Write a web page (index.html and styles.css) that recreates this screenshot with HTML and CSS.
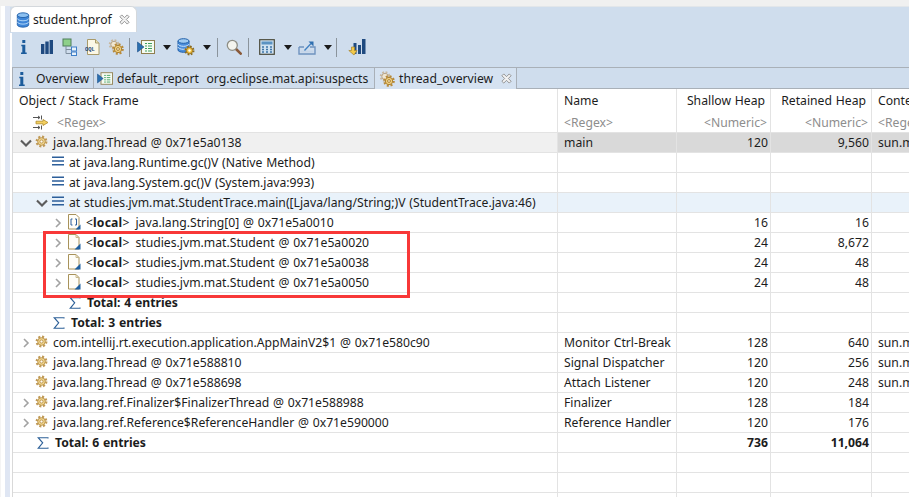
FILE: index.html
```html
<!DOCTYPE html>
<html lang="en">
<head>
<meta charset="utf-8">
<title>student.hprof</title>
<link rel="stylesheet" href="styles.css">
</head>
<body>
<svg class="sprite" xmlns="http://www.w3.org/2000/svg">
  <symbol id="db" viewBox="0 0 16 18">
    <path d="M1.5 3.5v11c0 1.500 3 2.700 6.500 2.700s6.500-1.200 6.500-2.700v-11z" fill="#3f86d8" stroke="#1f5fa8"/>
    <ellipse cx="8" cy="3.500" rx="6.500" ry="2.700" fill="#8cc0f0" stroke="#1f5fa8"/>
    <path d="M1.500 7.200c0 1.500 3 2.700 6.500 2.700s6.500-1.200 6.500-2.700M1.500 11c0 1.500 3 2.700 6.500 2.700s6.500-1.200 6.500-2.700" fill="none" stroke="#bfe0fa"/>
  </symbol>
  <symbol id="info" viewBox="0 0 16 16">
    <path d="M6.300 1v3h3V1zM5.300 5.800h4v7.700h1.400V15H5v-1.500h1.300V7.300h-1z" fill="#1c5c9c"/>
  </symbol>
  <symbol id="bars" viewBox="0 0 16 16">
    <path d="M2 5h3.400v10H2zM6.300 2.500h3.400V15H6.300zM10.600 1H14v14h-3.400z" fill="#1f4a80"/>
  </symbol>
  <symbol id="tree" viewBox="0 0 16 18">
    <rect x="1" y="1" width="8" height="7" fill="#8ed08a" stroke="#4f7f5a"/>
    <path d="M4 8v7.500h5M4 11.500h5" fill="none" stroke="#7f8f9f"/>
    <rect x="9.500" y="9" width="5" height="4" fill="#e8f2fb" stroke="#3f7fc8"/>
    <rect x="9.500" y="14" width="5" height="3.500" fill="#e8f2fb" stroke="#3f7fc8"/>
  </symbol>
  <symbol id="oql" viewBox="0 0 16 16">
    <path d="M2.500.5h8l3.500 3.500v11.500H2.500z" fill="#fbf7e6" stroke="#a89a6a"/>
    <path d="M10.500.5v3.500H14" fill="#e9dfb5" stroke="#a89a6a"/>
    <text x="0" y="11.500" class="oql-text">OQL</text>
  </symbol>
  <symbol id="gear" viewBox="0 0 16 16">
    <circle cx="8" cy="8" r="5.700" fill="none" stroke="#c09a58" stroke-width="3.200" stroke-dasharray="2.400 2.070"/>
    <circle cx="8" cy="8" r="4.700" fill="#f0d48c" stroke="#b48c44"/>
    <circle cx="8" cy="8" r="1.900" fill="#fffaf0" stroke="#b48c44"/>
  </symbol>
  <symbol id="gears" viewBox="0 0 16 16">
    <circle cx="6" cy="5.500" r="4" fill="none" stroke="#c8b8a0" stroke-width="2.600" stroke-dasharray="1.700 1.450"/>
    <circle cx="6" cy="5.500" r="3.200" fill="#efe6d2" stroke="#b8a58a"/>
    <circle cx="10" cy="10" r="4.500" fill="none" stroke="#b88a3a" stroke-width="2.600" stroke-dasharray="1.900 1.630"/>
    <circle cx="10" cy="10" r="3.700" fill="#f0d080" stroke="#ac8232"/>
    <circle cx="10" cy="10" r="1.400" fill="#fff8e0" stroke="#ac8232"/>
  </symbol>
  <symbol id="report" viewBox="0 0 18 16">
    <rect x="4.500" y="1.500" width="13" height="13" fill="#f6fbf2" stroke="#8f7f4f"/>
    <path d="M8 4.500h2M11 4.500h4M8 7h2M11 7h4M8 9.500h2M11 9.500h4M8 12h2M11 12h4" stroke="#3f9f5f"/>
    <path d="M.5 3l6.500 5-6.500 5z" fill="#2a6fb0" stroke="#1c4f88" stroke-width=".6"/>
  </symbol>
  <symbol id="dbgear" viewBox="0 0 18 18">
    <path d="M1 3v9c0 1.300 2.500 2.300 5.500 2.300s5.500-1 5.500-2.300V3z" fill="#4a8edc" stroke="#1f5fa8"/>
    <ellipse cx="6.500" cy="3" rx="5.500" ry="2.300" fill="#a0ccf2" stroke="#1f5fa8"/>
    <path d="M1 6c0 1.300 2.500 2.300 5.500 2.300S12 7.300 12 6M1 9c0 1.300 2.500 2.300 5.500 2.300S12 10.300 12 9" fill="none" stroke="#cfe6fb"/>
    <circle cx="12.500" cy="12.500" r="3.800" fill="none" stroke="#8a6a20" stroke-width="2.400" stroke-dasharray="1.600 1.380"/>
    <circle cx="12.500" cy="12.500" r="3.200" fill="#f0c040" stroke="#9a7420"/>
    <circle cx="12.500" cy="12.500" r="1.200" fill="#fff"/>
  </symbol>
  <symbol id="search" viewBox="0 0 16 16">
    <path d="M10 10l4.700 4.700" stroke="#8a5a3a" stroke-width="2.600" stroke-linecap="round"/>
    <circle cx="6.300" cy="6.300" r="5" fill="#f4f4ee" stroke="#8f8f86" stroke-width="1.300"/>
  </symbol>
  <symbol id="calc" viewBox="0 0 16 16">
    <rect x=".7" y=".7" width="14.600" height="14.600" fill="#cfe2f2" stroke="#4a4a3a" stroke-width="1.200"/>
    <rect x="2.500" y="2.500" width="11" height="3" fill="#5a92c2"/>
    <path d="M3 8h2M7 8h2M11 8h2M3 10.500h2M7 10.500h2M11 10.500h2M3 13h2M7 13h2M11 13h2" stroke="#3f76a8" stroke-width="1.400"/>
  </symbol>
  <symbol id="export" viewBox="0 0 18 16">
    <path d="M1 8h5M12 8h5v7H1V8" fill="none" stroke="#6f93bf" stroke-width="1.400"/>
    <path d="M2.500 11.500h13v2h-13z" fill="#c5d5e8"/>
    <path d="M6.500 11.500L13 4.500" stroke="#3f7fc0" stroke-width="1.300"/>
    <path d="M10.500 2.500h5v5z" fill="#2f6fb0"/>
  </symbol>
  <symbol id="barsarrow" viewBox="0 0 18 18">
    <path d="M5.500 5h3v11h-3zM10 7h3v9h-3zM14 1h3.500v15H14z" fill="#1f4a80"/>
    <path d="M6.500 9v3.500H9L6 17 .8 12.500h2.700V9z" fill="#f2c94a" stroke="#a8842a" stroke-width=".7"/>
  </symbol>
  <symbol id="close" viewBox="0 0 12 12">
    <path d="M1 3l2-2 3 3 3-3 2 2-3 3 3 3-2 2-3-3-3 3-2-2 3-3z" fill="#f2f2f2" stroke="#8c8c8c"/>
  </symbol>
  <symbol id="list" viewBox="0 0 14 10">
    <path d="M1 1.200h12M1 5h12M1 8.800h12" stroke="#2d5f9a" stroke-width="1.600"/>
  </symbol>
  <symbol id="doc" viewBox="0 0 14 16">
    <path d="M1.500.5h7.500l3 3v11.500H1.500z" fill="#fffef8" stroke="#a8925a"/>
    <path d="M9 .5v3h3" fill="none" stroke="#c8b88a"/>
    <path d="M13.500 9.500v6h-6z" fill="#20609f"/>
  </symbol>
  <symbol id="arraydoc" viewBox="0 0 14 16">
    <path d="M1.500.5h7.500l3 3v11.500H1.500z" fill="#fffef8" stroke="#a8925a"/>
    <path d="M5.500 5H4v6h1.500M8 5h1.500v6H8" fill="none" stroke="#2d5f9a"/>
    <path d="M13.500 10.500v5h-5z" fill="#20609f"/>
  </symbol>
  <symbol id="sigma" viewBox="0 0 12 12">
    <path d="M11 1.500V.7H1.200l4.500 5.100L1.200 11.300H11v-.9" fill="none" stroke="#2d6098" stroke-width="1.100"/>
  </symbol>
  <symbol id="right" viewBox="0 0 8 10">
    <path d="M2 1l4 4-4 4" fill="none" stroke="#a2a2a2" stroke-width="1.600"/>
  </symbol>
  <symbol id="down" viewBox="0 0 10 8">
    <path d="M1 2l4 4 4-4" fill="none" stroke="#5c5c5c" stroke-width="1.700"/>
  </symbol>
  <symbol id="filter" viewBox="0 0 18 15">
    <path d="M1 2.500h7M6 1l2 1.500L6 4M9.500.5v4M1 12.500h7M6 11l2 1.500L6 14M9.500 10.500v4" fill="none" stroke="#555"/>
    <path d="M4 6.200h7V4.500l5 3-5 3V8.800H4z" fill="#f3d060" stroke="#b08a2a" stroke-width=".8"/>
  </symbol>
</svg>

<div class="app">
  <div class="gutter"></div>
  <main class="editor">
    <div class="editor-tabs">
      <div class="editor-tab">
        <svg class="ico-db"><use href="#db"/></svg>
        <span class="editor-tab-label">student.hprof</span>
        <svg class="ico-close"><use href="#close"/></svg>
      </div>
    </div>
    <div class="toolbar">
      <span class="tool"><svg class="ico-16"><use href="#info"/></svg></span>
      <span class="tool"><svg class="ico-16"><use href="#bars"/></svg></span>
      <span class="tool"><svg class="ico-18"><use href="#tree"/></svg></span>
      <span class="tool"><svg class="ico-16"><use href="#oql"/></svg></span>
      <span class="tool"><svg class="ico-16"><use href="#gears"/></svg></span>
      <span class="sep"></span>
      <span class="tool"><svg class="ico-18"><use href="#report"/></svg></span>
      <span class="arrow"></span>
      <span class="tool"><svg class="ico-18"><use href="#dbgear"/></svg></span>
      <span class="arrow"></span>
      <span class="sep"></span>
      <span class="tool"><svg class="ico-16"><use href="#search"/></svg></span>
      <span class="sep sep-loose"></span>
      <span class="tool"><svg class="ico-16"><use href="#calc"/></svg></span>
      <span class="arrow"></span>
      <span class="tool"><svg class="ico-18"><use href="#export"/></svg></span>
      <span class="arrow"></span>
      <span class="sep sep-last"></span>
      <span class="tool"><svg class="ico-18"><use href="#barsarrow"/></svg></span>
    </div>
    <div class="subtabs">
      <div class="subtab subtab-overview"><svg class="ico-16"><use href="#info"/></svg><span>Overview</span></div>
      <div class="subtab subtab-report"><svg class="ico-report"><use href="#report"/></svg><span>default_report&nbsp; org.eclipse.mat.api:suspects</span></div>
      <div class="subtab subtab-active"><svg class="ico-16"><use href="#gears"/></svg><span>thread_overview</span><svg class="ico-close"><use href="#close"/></svg></div>
    </div>
    <div class="table-wrap">
      <table class="grid">
        <colgroup>
          <col class="c-object"><col class="c-name"><col class="c-shallow"><col class="c-retained"><col class="c-context">
        </colgroup>
        <thead>
          <tr class="head">
            <th class="first">Object / Stack Frame</th><th>Name</th><th class="num">Shallow Heap</th><th class="num">Retained Heap</th><th>Context Class Loader</th>
          </tr>
          <tr class="filter-row">
            <th class="first"><div class="tree lv0"><span class="twist"></span><svg class="ico-filter"><use href="#filter"/></svg><span>&lt;Regex&gt;</span></div></th><th>&lt;Regex&gt;</th><th class="num">&lt;Numeric&gt;</th><th class="num">&lt;Numeric&gt;</th><th>&lt;Regex&gt;</th>
          </tr>
        </thead>
        <tbody>
          <tr class="selected">
            <td><div class="tree lv0"><svg class="twist"><use href="#down"/></svg><svg class="node"><use href="#gear"/></svg>java.lang.Thread @ 0x71e5a0138</div></td><td>main</td><td class="num">120</td><td class="num">9,560</td><td>sun.misc.Launcher</td>
          </tr>
          <tr>
            <td><div class="tree lv1"><span class="twist"></span><svg class="node-list"><use href="#list"/></svg>at java.lang.Runtime.gc()V (Native Method)</div></td><td></td><td></td><td></td><td></td>
          </tr>
          <tr>
            <td><div class="tree lv1"><span class="twist"></span><svg class="node-list"><use href="#list"/></svg>at java.lang.System.gc()V (System.java:993)</div></td><td></td><td></td><td></td><td></td>
          </tr>
          <tr class="hover">
            <td><div class="tree lv1"><svg class="twist"><use href="#down"/></svg><svg class="node-list"><use href="#list"/></svg>at studies.jvm.mat.StudentTrace.main([Ljava/lang/String;)V (StudentTrace.java:46)</div></td><td></td><td></td><td></td><td></td>
          </tr>
          <tr>
            <td><div class="tree lv2"><svg class="twist"><use href="#right"/></svg><svg class="node node-doc"><use href="#arraydoc"/></svg><span class="local-tag">&lt;<b>local</b>&gt;</span><span>java.lang.String[0] @ 0x71e5a0010</span></div></td><td></td><td class="num">16</td><td class="num">16</td><td></td>
          </tr>
          <tr>
            <td><div class="tree lv2"><svg class="twist"><use href="#right"/></svg><svg class="node node-doc"><use href="#doc"/></svg><span class="local-tag">&lt;<b>local</b>&gt;</span><span>studies.jvm.mat.Student @ 0x71e5a0020</span></div></td><td></td><td class="num">24</td><td class="num">8,672</td><td></td>
          </tr>
          <tr>
            <td><div class="tree lv2"><svg class="twist"><use href="#right"/></svg><svg class="node node-doc"><use href="#doc"/></svg><span class="local-tag">&lt;<b>local</b>&gt;</span><span>studies.jvm.mat.Student @ 0x71e5a0038</span></div></td><td></td><td class="num">24</td><td class="num">48</td><td></td>
          </tr>
          <tr>
            <td><div class="tree lv2"><svg class="twist"><use href="#right"/></svg><svg class="node node-doc"><use href="#doc"/></svg><span class="local-tag">&lt;<b>local</b>&gt;</span><span>studies.jvm.mat.Student @ 0x71e5a0050</span></div></td><td></td><td class="num">24</td><td class="num">48</td><td></td>
          </tr>
          <tr class="total">
            <td><div class="tree lv2"><span class="twist"></span><svg class="node-sigma"><use href="#sigma"/></svg>Total: 4 entries</div></td><td></td><td></td><td></td><td></td>
          </tr>
          <tr class="total">
            <td><div class="tree lv1"><span class="twist"></span><svg class="node-sigma"><use href="#sigma"/></svg>Total: 3 entries</div></td><td></td><td></td><td></td><td></td>
          </tr>
          <tr>
            <td><div class="tree lv0"><svg class="twist"><use href="#right"/></svg><svg class="node"><use href="#gear"/></svg>com.intellij.rt.execution.application.AppMainV2$1 @ 0x71e580c90</div></td><td>Monitor Ctrl-Break</td><td class="num">128</td><td class="num">640</td><td>sun.misc.Launcher</td>
          </tr>
          <tr>
            <td><div class="tree lv0"><span class="twist"></span><svg class="node"><use href="#gear"/></svg>java.lang.Thread @ 0x71e588810</div></td><td>Signal Dispatcher</td><td class="num">120</td><td class="num">256</td><td>sun.misc.Launcher</td>
          </tr>
          <tr>
            <td><div class="tree lv0"><span class="twist"></span><svg class="node"><use href="#gear"/></svg>java.lang.Thread @ 0x71e588698</div></td><td>Attach Listener</td><td class="num">120</td><td class="num">248</td><td>sun.misc.Launcher</td>
          </tr>
          <tr>
            <td><div class="tree lv0"><svg class="twist"><use href="#right"/></svg><svg class="node"><use href="#gear"/></svg>java.lang.ref.Finalizer$FinalizerThread @ 0x71e588988</div></td><td>Finalizer</td><td class="num">128</td><td class="num">184</td><td></td>
          </tr>
          <tr>
            <td><div class="tree lv0"><svg class="twist"><use href="#right"/></svg><svg class="node"><use href="#gear"/></svg>java.lang.ref.Reference$ReferenceHandler @ 0x71e590000</div></td><td>Reference Handler</td><td class="num">120</td><td class="num">176</td><td></td>
          </tr>
          <tr class="total">
            <td><div class="tree lv0"><span class="twist"></span><svg class="node-sigma"><use href="#sigma"/></svg>Total: 6 entries</div></td><td></td><td class="num">736</td><td class="num">11,064</td><td></td>
          </tr>
          <tr><td></td><td></td><td></td><td></td><td></td></tr>
          <tr><td></td><td></td><td></td><td></td><td></td></tr>
          <tr><td></td><td></td><td></td><td></td><td></td></tr>
        </tbody>
      </table>
    </div>
  </main>
  <div class="annotation"></div>
</div>
</body>
</html>
```
FILE: styles.css
```css
* { box-sizing: border-box; }
html, body { margin: 0; height: 100%; overflow: hidden; background: #fff; }
body {
  font-family: "Noto Sans", "Open Sans", sans-serif;
  font-size: 12.2px;
  word-spacing: .6px;
  color: #1c1c1c;
}
.sprite { display: none; }
.app { position: relative; display: flex; height: 497px; overflow: hidden; border-top: 6px solid #f0f0f0; }
.gutter { width: 10px; flex: none; background: linear-gradient(to right, #f4f4f4 0 1px, #fff 1px 5px, #dfe6f3 5px 10px); }
.editor { flex: 1; min-width: 0; display: flex; flex-direction: column; }

.editor-tabs { height: 27px; flex: none; display: flex; background: #cfdded; border-top: 1px solid #e2e6ea; }
.editor-tab {
  width: 127px; height: 26px; display: flex; align-items: center;
  background: #fff; border: 1px solid #d4d8dc; border-bottom: none; border-radius: 6px 6px 0 0;
  padding-left: 5px; margin-top: -1px;
}
.editor-tab-label { margin-left: 1px; width: 86px; }
.ico-db { width: 14px; height: 18px; margin-right: 2px; }
.ico-close { width: 11px; height: 11px; }

.toolbar { height: 34px; flex: none; margin-left: 2px; padding-bottom: 6px; background: #cfdded; display: flex; align-items: center; }
.tool { width: 23px; height: 24px; display: flex; align-items: center; justify-content: center; flex: none; }
.tool ~ .sep ~ .tool { width: 22px; }
.ico-16 { width: 16px; height: 16px; }
.ico-18 { width: 18px; height: 18px; }
.oql-text { font: bold 5.500px "Liberation Mono", monospace; fill: #1f4a80; }
.sep { width: 1px; height: 19px; background: #8b949c; margin: 0 5px 0 2px; flex: none; }
.sep-loose { margin: 0 7px 0 3px; }
.sep-last { margin: 0 9px 0 0; }
.arrow { width: 18px; display: flex; justify-content: center; flex: none; }
.arrow::before { content: ""; border: 4px solid transparent; border-top: 5px solid #1a1a1a; border-bottom: 0; margin-left: 2px; }

.subtabs {
  height: 22px; flex: none; margin-left: 2px; display: flex; background: #cfdded;
  border-top: 1px solid #a9b0b8; border-bottom: 1px solid #a9b0b8;
}
.subtab { height: 21px; display: flex; align-items: center; border-right: 1px solid #a9b0b8; border-left: 1px solid #a9b0b8; flex: none; gap: 4px; }
.subtab + .subtab { border-left: none; }
.subtab-overview { width: 82px; padding-left: 1px; gap: 6px; }
.subtab-report { width: 281px; padding-left: 3px; }
.ico-report { width: 16px; height: 15px; }
.subtab-active { width: 142px; padding-left: 4px; background: #d5e2f1; }
.subtab-active .ico-close { margin-left: 4px; }

.table-wrap { flex: 1; margin-left: 2px; min-height: 0; overflow: hidden; border-left: 1px solid #d9d9d9; }
.grid { border-collapse: separate; border-spacing: 0; table-layout: fixed; width: 961px; }
.c-object { width: 545px; }
.c-name { width: 119px; }
.c-shallow { width: 94px; }
.c-retained { width: 101px; }
.c-context { width: 102px; }
.grid th, .grid td {
  padding: 0 0 0 6px; font-weight: normal; text-align: left; white-space: nowrap; overflow: hidden;
  border-right: 1px solid #e3e3e3;
}
.grid td.num { text-align: right; padding: 0 2px 0 0; }
.grid th.num { text-align: right; padding: 0 3px 0 0; }
.head th.num { padding-right: 5px; }
.grid td { height: 20px; border-bottom: 1px solid #e3e3e3; }
.grid td:first-child { padding-left: 6px; }
.head th { height: 23px; }
.filter-row th { height: 21px; border-bottom: 1px solid #e3e3e3; color: #8d8d8d; }
.filter-row th.first { padding-left: 5px; }

.selected td { background: #d9d9d9; }
.selected td:first-child { background: #f0f0f0; }
.hover td { background: #e9f2fa; }
.grid .total td { font-weight: 700; }

.tree { display: flex; align-items: center; height: 19px; }
.lv1 { padding-left: 16px; }
.lv2 { padding-left: 32px; }
.twist { width: 14px; height: 10px; flex: none; }
.node { width: 13px; height: 15px; flex: none; margin: -3px 5px 0 2px; }
.node-doc { width: 14px; height: 16px; margin: -1px 5px 0 2px; }
.node-list { width: 14px; height: 10px; flex: none; margin: -3px 4px 0 2px; }
.node-sigma { width: 12px; height: 12px; flex: none; margin: 0 6px 0 4px; }
.local-tag { margin-right: 6px; }
.local-tag b { letter-spacing: .2px; }
.ico-filter { width: 18px; height: 15px; flex: none; margin-right: 7px; }

.annotation { position: absolute; left: 43px; top: 225px; width: 367px; height: 67px; border: 3px solid #f83838; }
```
